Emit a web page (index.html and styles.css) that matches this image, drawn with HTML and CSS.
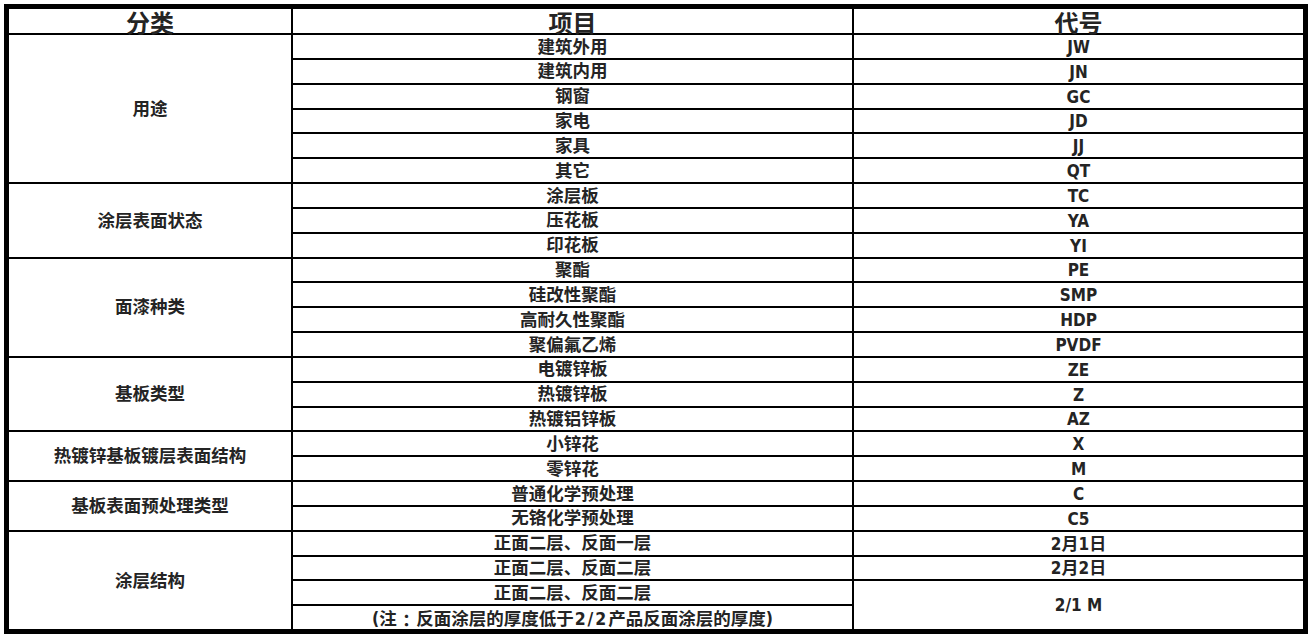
FILE: index.html
```html
<!DOCTYPE html>
<html lang="zh-CN">
<head>
<meta charset="utf-8">
<title>涂层代号</title>
<link rel="stylesheet" href="styles.css">
</head>
<body>
<div class="sheet">
  <div class="grid">
    <div class="cell head">分类</div>
    <div class="cell head">项目</div>
    <div class="cell head">代号</div>

    <div class="cell cat r1-6">用途</div>
    <div class="cell">建筑外用</div><div class="cell code">JW</div>
    <div class="cell">建筑内用</div><div class="cell code">JN</div>
    <div class="cell">钢窗</div><div class="cell code">GC</div>
    <div class="cell">家电</div><div class="cell code">JD</div>
    <div class="cell">家具</div><div class="cell code">JJ</div>
    <div class="cell">其它</div><div class="cell code">QT</div>

    <div class="cell cat span3">涂层表面状态</div>
    <div class="cell">涂层板</div><div class="cell code">TC</div>
    <div class="cell">压花板</div><div class="cell code">YA</div>
    <div class="cell">印花板</div><div class="cell code">YI</div>

    <div class="cell cat span4">面漆种类</div>
    <div class="cell">聚酯</div><div class="cell code">PE</div>
    <div class="cell">硅改性聚酯</div><div class="cell code">SMP</div>
    <div class="cell">高耐久性聚酯</div><div class="cell code">HDP</div>
    <div class="cell">聚偏氟乙烯</div><div class="cell code">PVDF</div>

    <div class="cell cat span3">基板类型</div>
    <div class="cell">电镀锌板</div><div class="cell code">ZE</div>
    <div class="cell">热镀锌板</div><div class="cell code">Z</div>
    <div class="cell">热镀铝锌板</div><div class="cell code">AZ</div>

    <div class="cell cat span2">热镀锌基板镀层表面结构</div>
    <div class="cell">小锌花</div><div class="cell code">X</div>
    <div class="cell">零锌花</div><div class="cell code">M</div>

    <div class="cell cat span2">基板表面预处理类型</div>
    <div class="cell">普通化学预处理</div><div class="cell code">C</div>
    <div class="cell">无铬化学预处理</div><div class="cell code">C5</div>

    <div class="cell cat span4">涂层结构</div>
    <div class="cell">正面二层、反面一层</div><div class="cell code">2月1日</div>
    <div class="cell">正面二层、反面二层</div><div class="cell code">2月2日</div>
    <div class="cell">正面二层、反面二层</div><div class="cell code span2 low">2/1 M</div>
    <div class="cell note">(注<span class="colon">：</span>反面涂层的厚度低于<span class="ratio">2/2</span>产品反面涂层的厚度)</div>
  </div>
</div>
</body>
</html>
```

FILE: styles.css
```css
html, body {
  margin: 0;
  padding: 0;
  background: #ffffff;
}

body {
  padding: 4px 0 0 4px;
  font-family: "DejaVu Sans Condensed", "DejaVu Sans", "Noto Sans CJK SC", sans-serif;
  font-weight: 700;
  color: #242424;
}

.sheet {
  width: 1294px;
  height: 620px;
  border: 5px solid #000;
  background: #000;
}

.grid {
  display: grid;
  grid-template-columns: 282px 559px 449px;
  grid-template-rows: 24px repeat(24, 1fr);
  gap: 2px;
  height: 100%;
  background: #000;
}

.cell {
  background: #fff;
  display: flex;
  align-items: center;
  justify-content: center;
  font-size: 17.5px;
  line-height: 1;
  padding-top: 2px;
  white-space: nowrap;
}

.code {
  font-size: 17px;
}

.head {
  font-size: 24px;
  padding-top: 5px;
}

.cat {
  grid-column: 1;
}

.r1-6 { grid-row: span 6; }
.span2 { grid-row: span 2; }
.span3 { grid-row: span 3; }
.span4 { grid-row: span 4; }

.low {
  padding-top: 0;
}

.note {
  align-items: flex-end;
  padding-bottom: 1px;
}

.colon {
  font-family: "Noto Sans CJK TC", sans-serif;
  padding: 0 1px;
}

.ratio {
  letter-spacing: 2px;
  padding-left: 1px;
}
```
